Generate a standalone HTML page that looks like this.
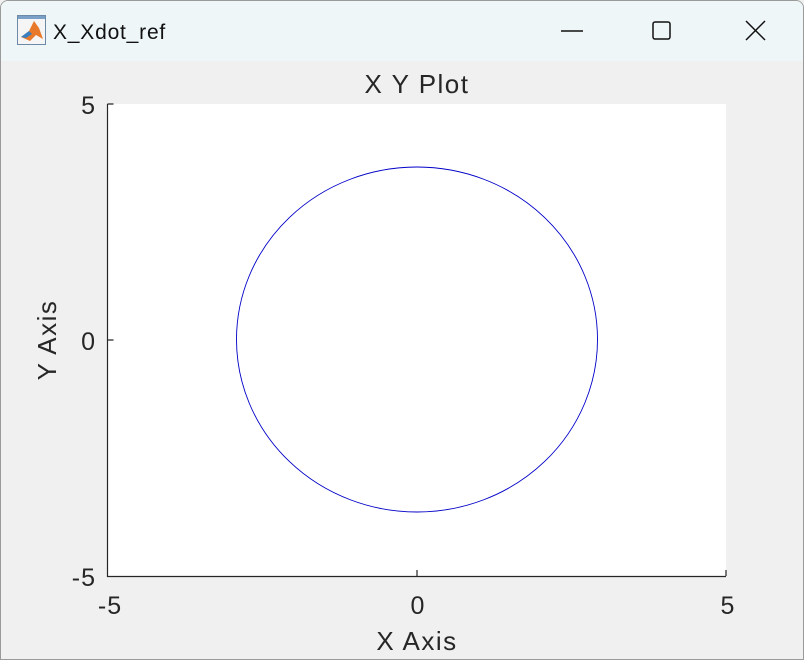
<!DOCTYPE html>
<html><head><style>
body{margin:0;width:804px;height:660px;overflow:hidden;background:#f0f0f0;font-family:"Liberation Sans",sans-serif;}
.win{position:absolute;left:0;top:0;width:802px;height:658px;border:1px solid #9a9a9a;border-radius:8px 8px 0 0;background:#f0f0f0;overflow:hidden}
.tb{position:absolute;left:0;top:0;width:802px;height:60px;background:#eef6f8}
</style></head><body>
<div class="win">
<div class="tb"></div>
<svg style="position:absolute;left:0;top:0" width="802" height="60">
<rect x="16.5" y="14.5" width="28" height="29" fill="#f5f5f5" stroke="#6c8aa8"/>
<rect x="17" y="15" width="27" height="3" fill="#7aa0c8"/>
<path d="M20 36 L28 30 L33 20 L38 27 L42 38 L35 34 L29 40 Z" fill="#e8792a"/>
<path d="M20 36 L28 30 L31 33 L25 37Z" fill="#3a7fc0"/>
<text x="52" y="38" font-size="21" letter-spacing="0.8" fill="#111" font-family="Liberation Sans">X_Xdot_ref</text>
<line x1="560" y1="30" x2="582" y2="30" stroke="#111" stroke-width="1.5"/>
<rect x="652" y="21" width="17" height="17" rx="2" fill="none" stroke="#111" stroke-width="1.5"/>
<path d="M745 20 L764 39 M764 20 L745 39" stroke="#111" stroke-width="1.5"/>
</svg>
<svg style="position:absolute;left:0;top:0" width="802" height="658">
<rect x="106" y="103" width="619" height="472" fill="#fff"/>
<path d="M106.5 103 V575.5 H725" fill="none" stroke="#262626" stroke-width="1.2"/>
<path d="M106.5 103 h6 M106.5 339 h6 M416 575 v-6 M725 575 v-6" stroke="#262626" stroke-width="1.2"/>
<ellipse cx="416" cy="338.5" rx="180.5" ry="172.5" fill="none" stroke="#0000c8" stroke-width="0.9"/>
<g font-family="Liberation Sans" font-size="25" fill="#262626" letter-spacing="1">
<text x="416" y="92" text-anchor="middle" font-size="26" letter-spacing="1.5">X Y Plot</text>
<text x="95" y="113" text-anchor="end">5</text>
<text x="95" y="349" text-anchor="end">0</text>
<text x="95" y="585" text-anchor="end">-5</text>
<text x="109" y="613" text-anchor="middle">-5</text>
<text x="417" y="613" text-anchor="middle">0</text>
<text x="727" y="613" text-anchor="middle">5</text>
<text x="416" y="649" text-anchor="middle" font-size="26" letter-spacing="1.5">X Axis</text>
<text transform="translate(55,339) rotate(-90)" text-anchor="middle" font-size="26" letter-spacing="1.5">Y Axis</text>
</g>
</svg>
</div>
</body></html>
